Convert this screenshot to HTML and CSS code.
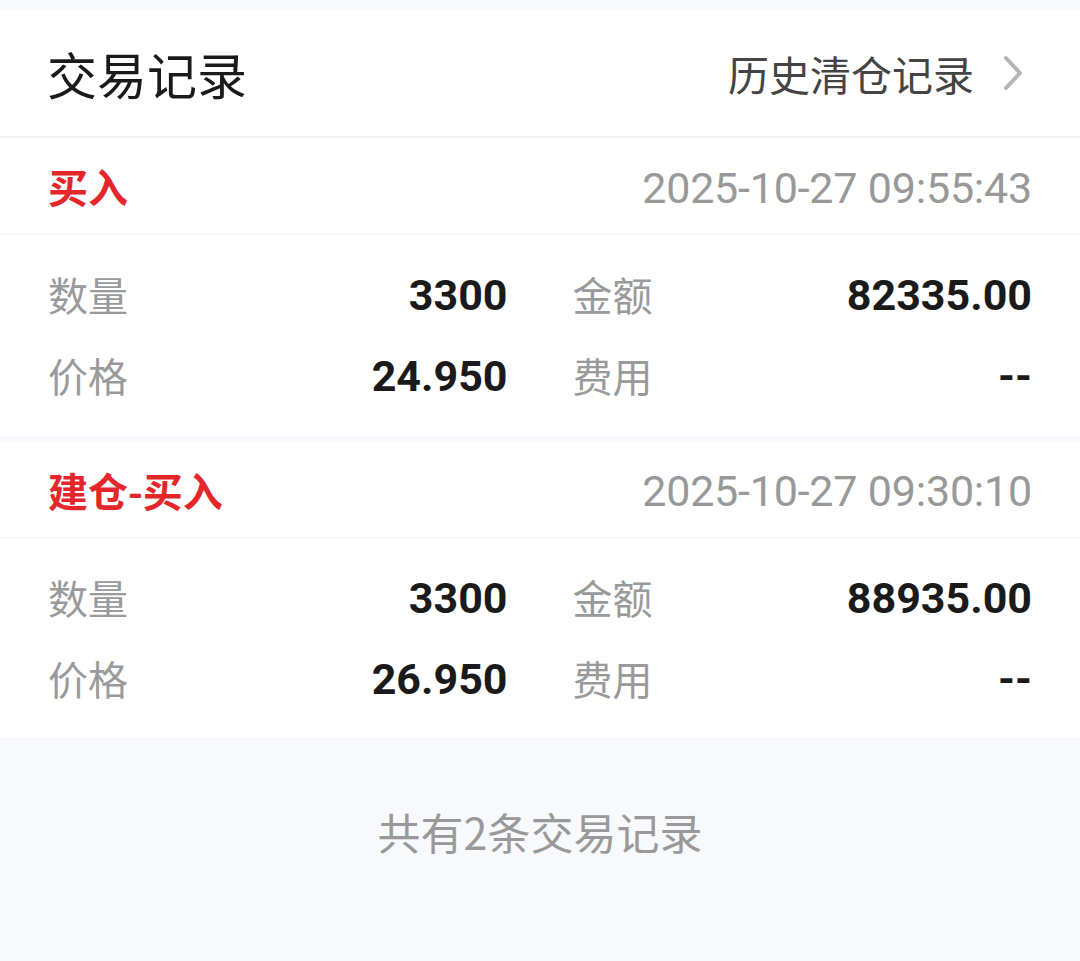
FILE: index.html
```html
<!DOCTYPE html>
<html lang="zh-CN">
<head>
<meta charset="utf-8">
<title>交易记录</title>
<link rel="stylesheet" href="styles.css">
</head>
<body>
<div class="page">
  <header class="header">
    <div class="header-title">交易记录</div>
    <a class="header-link" href="#">
      <span>历史清仓记录</span>
      <svg class="chevron" width="24" height="36" viewBox="0 0 24 36"><path d="M4 3 L18 18 L4 33" fill="none" stroke="#b5b5b5" stroke-width="4" stroke-linecap="round" stroke-linejoin="round"/></svg>
    </a>
  </header>

  <section class="card card-first">
    <div class="card-head">
      <span class="type">买入</span>
      <span class="time">2025-10-27 09:55:43</span>
    </div>
    <div class="card-body">
      <div class="cell"><span class="label">数量</span><span class="value">3300</span></div>
      <div class="cell"><span class="label">金额</span><span class="value">82335.00</span></div>
      <div class="cell"><span class="label">价格</span><span class="value">24.950</span></div>
      <div class="cell"><span class="label">费用</span><span class="value">--</span></div>
    </div>
  </section>

  <section class="card card-last">
    <div class="card-head">
      <span class="type">建仓-买入</span>
      <span class="time">2025-10-27 09:30:10</span>
    </div>
    <div class="card-body">
      <div class="cell"><span class="label">数量</span><span class="value">3300</span></div>
      <div class="cell"><span class="label">金额</span><span class="value">88935.00</span></div>
      <div class="cell"><span class="label">价格</span><span class="value">26.950</span></div>
      <div class="cell"><span class="label">费用</span><span class="value">--</span></div>
    </div>
  </section>

  <footer class="footer">共有2条交易记录</footer>
</div>
</body>
</html>
```

FILE: styles.css
```css
* { box-sizing: border-box; }
html, body { margin: 0; padding: 0; }
body {
  background: #f7f9fd;
  font-family: Roboto, "Noto Sans CJK SC", sans-serif;
}
.page {
  padding-top: 10px;
}
.header {
  height: 128px;
  background: #fff;
  border-bottom: 2px solid #f2f4f9;
  padding: 0 48px 0 47px;
  display: flex;
  align-items: center;
  justify-content: space-between;
}
.header-title {
  font-family: "Noto Sans CJK SC", sans-serif;
  font-size: 50px;
  color: #1a1a1a;
  line-height: 1;
}
.header-link {
  display: flex;
  align-items: center;
  gap: 28px;
  text-decoration: none;
  font-family: "Noto Sans CJK SC", sans-serif;
  font-size: 41px;
  color: #444;
  line-height: 1;
  margin-right: 6px;
}
.chevron { display: block; }
.card {
  background: #fff;
  margin-top: 6px;
}
.card-first { margin-top: 0; }
.card-head {
  height: 97px;
  padding: 0 48px;
  display: flex;
  align-items: center;
  justify-content: space-between;
  border-bottom: 1px solid #f3f3f3;
}
.card-last .card-head { height: 96px; }
.type {
  font-family: "Noto Sans CJK SC", sans-serif;
  font-weight: 700;
  font-size: 40px;
  color: #e5262a;
  line-height: 1;
}
.time {
  font-family: Roboto, sans-serif;
  font-size: 43px;
  color: #999;
  letter-spacing: -0.2px;
  line-height: 1;
  margin-top: 4px;
}
.card-body {
  display: grid;
  grid-template-columns: 1fr 1fr;
  column-gap: 65px;
  padding: 20px 48px 19px;
}
.card-last .card-body { padding-bottom: 17px; }
.cell {
  height: 81px;
  display: flex;
  align-items: center;
  justify-content: space-between;
}
.label {
  font-family: "Noto Sans CJK SC", sans-serif;
  font-size: 40px;
  color: #9a9a9a;
  line-height: 1;
  margin-top: -3px;
}
.value {
  font-family: Roboto, sans-serif;
  font-weight: 700;
  font-size: 43px;
  color: #1a1a1a;
  line-height: 1;
}
.footer {
  text-align: center;
  padding-top: 68px;
  font-family: "Noto Sans CJK SC", Roboto, sans-serif;
  font-size: 43px;
  color: #999;
  line-height: 52px;
}
```
